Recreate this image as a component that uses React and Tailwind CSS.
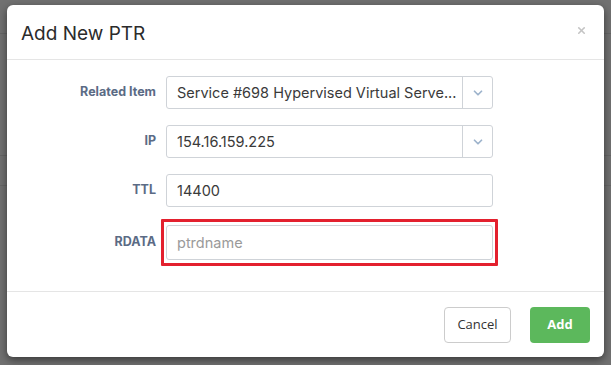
import { ChevronDown, X } from "lucide-react";

const font = { fontFamily: "Inter, 'Noto Sans', sans-serif" };

function Row({ label, children, className = "" }) {
    return (
        <div className={"flex items-center " + className}>
            <div className="w-[159px] pr-[10px] text-right text-[12.5px] font-bold text-[#5b6b85]">{label}</div>
            {children}
        </div>
    );
}

function SelectBox({ value }) {
    return (
        <div className="flex h-[33px] w-[327px] items-center rounded-[3px] border border-[#cfd3d8] bg-white">
            <div className="flex-1 overflow-hidden whitespace-nowrap pl-[10px] text-[14.5px] text-[#3a3a3a]">{value}</div>
            <div className="flex h-full w-[30px] shrink-0 items-center justify-center border-l border-[#cfd3d8]">
                <ChevronDown size={14} strokeWidth={3} className="text-[#9db3cc]" />
            </div>
        </div>
    );
}

export default function App() {
    return (
        <div className="relative h-[365px] w-[611px] overflow-hidden bg-[#717171]" style={font}>
            {/* page behind overlay */}
            <div className="absolute left-0 top-[33px] h-px w-full bg-[#666]" />
            <div className="absolute left-0 top-[155px] h-px w-full bg-[#666]" />
            <div className="absolute left-0 top-[185px] h-px w-full bg-[#676767]" />

            <div className="absolute left-[7px] top-[5px] flex h-[352px] w-[597px] flex-col rounded-[6px] bg-white shadow-[0_3px_9px_rgba(0,0,0,0.5)]">
                <div className="flex h-[55px] items-center justify-between border-b border-[#e5e5e5] pl-[14px] pr-[17px] pt-[5px]">
                    <h4 className="text-[19px] text-[#2b2b2b]">Add New PTR</h4>
                    <X size={11} strokeWidth={3.5} className="mb-[8px] text-[#c4c4c4]" />
                </div>

                <div className="flex flex-1 flex-col gap-[16px] pt-[16px]">
                    <Row label="Related Item">
                        <SelectBox value="Service #698 Hypervised Virtual Serve..." />
                    </Row>
                    <Row label="IP">
                        <SelectBox value="154.16.159.225" />
                    </Row>
                    <Row label="TTL">
                        <div className="flex h-[33px] w-[327px] items-center rounded-[3px] border border-[#cfd3d8] pl-[10px] text-[14.5px] text-[#3a3a3a]">
                            14400
                        </div>
                    </Row>
                    <Row label="RDATA" className="-mt-[4px]">
                        <div className="-ml-[5px] rounded-[1px] border-[3px] border-[#e3202e] px-[2px] py-[3px]">
                            <div className="flex h-[35px] w-[327px] items-center rounded-[3px] border border-[#cfd3d8] pl-[10px] text-[14.5px] text-[#9a9a9a]">
                                ptrdname
                            </div>
                        </div>
                    </Row>
                </div>

                <div className="flex h-[66px] items-center justify-end gap-[19px] border-t border-[#e5e5e5] pr-[14px]" style={{ fontFamily: "'Open Sans', sans-serif" }}>
                    <button className="h-[36px] w-[67px] rounded-[4px] border border-[#ccc] bg-white text-[13px] text-[#333]">Cancel</button>
                    <button className="h-[36px] w-[60px] rounded-[4px] bg-[#5cb85c] text-[13px] font-bold text-white">Add</button>
                </div>
            </div>
        </div>
    );
}
